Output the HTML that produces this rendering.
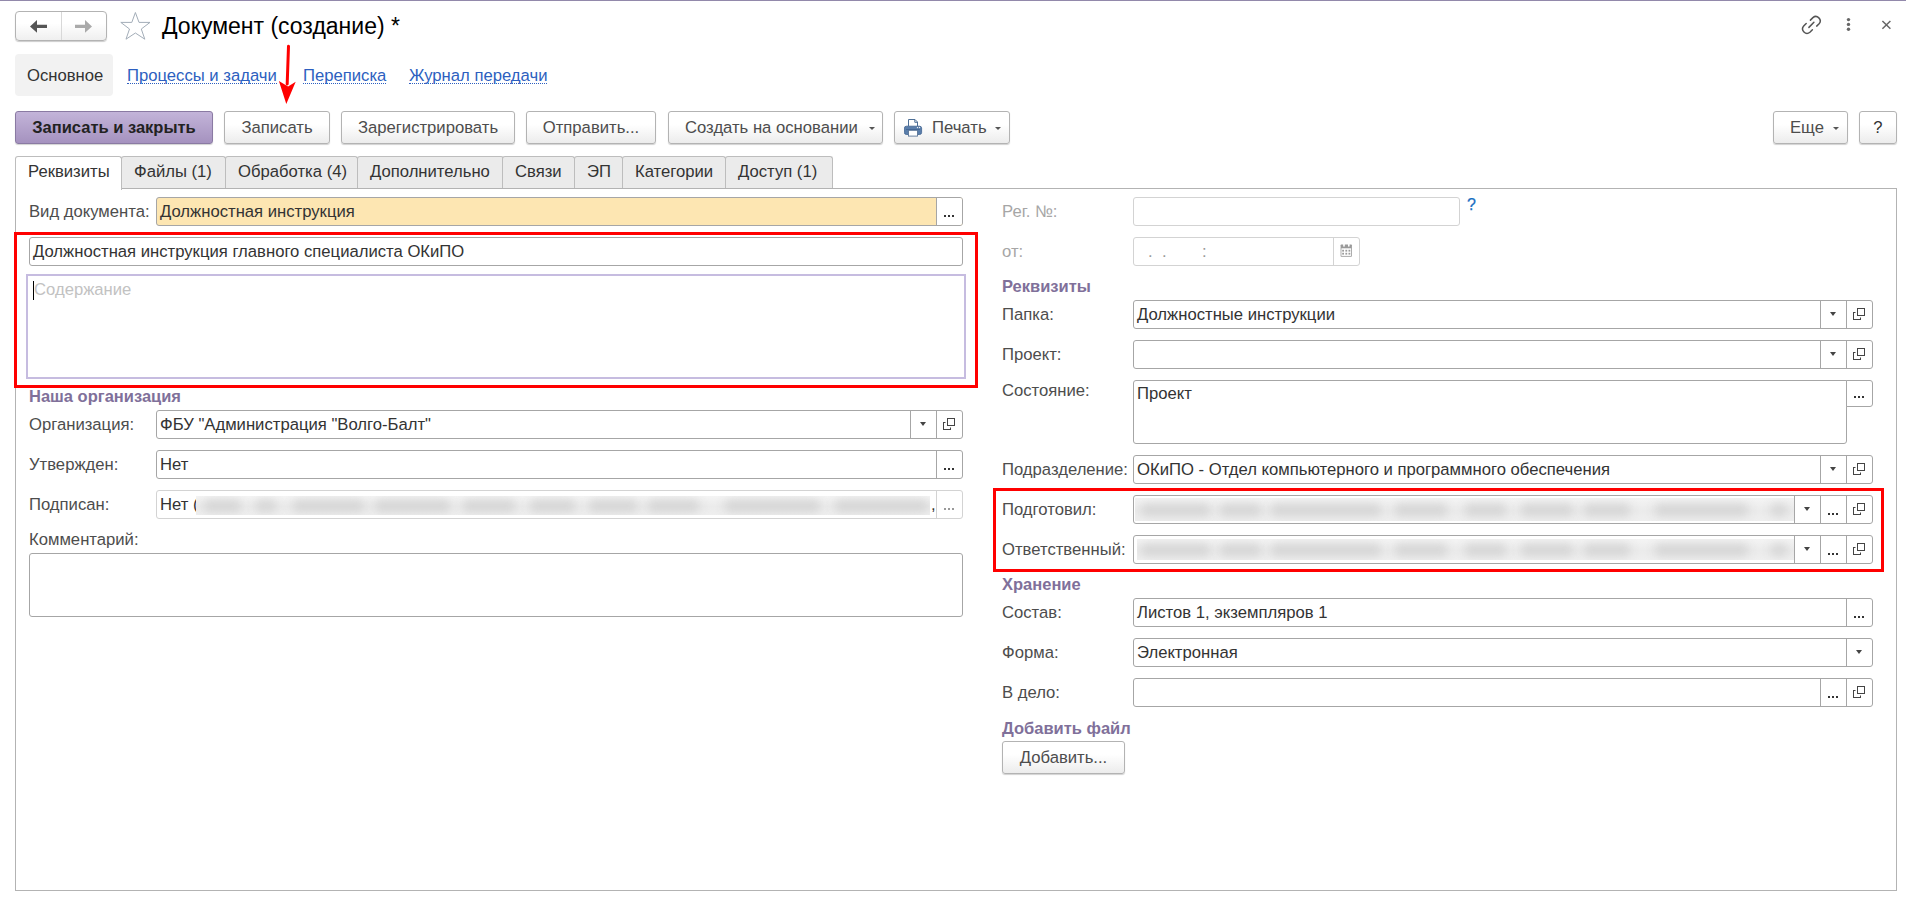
<!DOCTYPE html>
<html><head><meta charset="utf-8">
<style>
*{box-sizing:border-box;margin:0;padding:0}
html,body{width:1906px;height:904px;overflow:hidden;background:#fff}
body{position:relative;font-family:"Liberation Sans",sans-serif;font-size:16.67px;color:#333}
.a{position:absolute}
.t{position:absolute;line-height:20px;white-space:nowrap;margin-top:1px}
.lbl{color:#4d4d4d}
.grp{color:#80709a;font-weight:bold;font-size:16.5px;margin-top:0}
.btn{position:absolute;height:33px;top:111px;border:1px solid #b3b3b3;border-radius:3px;background:linear-gradient(#fff 0%,#fff 40%,#ececec 100%);box-shadow:0 1px 1px rgba(0,0,0,.18);color:#4d4d4d;line-height:31px;text-align:center;white-space:nowrap}
.tab{position:absolute;top:156px;height:32px;border:1px solid #bdbdbd;border-bottom:none;border-radius:3px 3px 0 0;background:#ebebeb;color:#333;line-height:29px;white-space:nowrap;padding-left:12px}
.fld{position:absolute;height:28px;border:1px solid #a6a6a6;border-radius:3px;background:#fff;overflow:hidden}
.fld.lt,.fb.lt{border-color:#d3d3d3}
.val{position:absolute;left:3px;top:0;margin-top:1px;line-height:26px;white-space:nowrap;color:#333}
.fb{position:absolute;top:0;bottom:0;width:26px;border-left:1px solid #a6a6a6}
.dd:after{content:"";position:absolute;left:9px;top:11px;border-left:3px solid transparent;border-right:3px solid transparent;border-top:4px solid #444}
.link{color:#2d5fc0}
.link span{display:inline-block;line-height:15px;border-bottom:1px dotted #2d5fc0}
.dots{position:absolute;left:0;right:0;top:0;bottom:0}
.dots i{position:absolute;top:17px;width:2px;height:2px;background:#333}
.blur{position:absolute;background:linear-gradient(#f4f4f4,#ebebeb 55%,#efefef);overflow:hidden}
.blur b{position:absolute;top:50%;height:12px;margin-top:-6px;background:#d5d5d5;filter:blur(5px);border-radius:6px}
.op:after{content:"";position:absolute;box-sizing:border-box;left:10px;top:7px;width:8px;height:8px;border:1.3px solid #444;background:#fff;box-shadow:0 0 0 1.5px #fff}
.op:before{content:"";position:absolute;box-sizing:border-box;left:6px;top:11px;width:8px;height:8px;border:1.3px solid #444}
.tri{position:absolute;top:15px;width:0;height:0;border-left:3px solid transparent;border-right:3px solid transparent;border-top:3px solid #555}
.red{position:absolute;border:3px solid #f00}
</style></head><body>
<!-- top line -->
<div class="a" style="left:0;top:0;width:1906px;height:1px;background:#9289ab"></div>

<!-- nav buttons -->
<div class="a" style="left:15px;top:11px;width:92px;height:30px;border:1px solid #b3b3b3;border-radius:4px;background:linear-gradient(#fff 40%,#efefef);box-shadow:0 1px 1px rgba(0,0,0,.2)"></div>
<div class="a" style="left:61px;top:12px;width:1px;height:28px;background:#d8d8d8"></div>
<svg class="a" style="left:0;top:0" width="160" height="50">
 <path d="M30 26.4 L37 20 L37 24.7 L47 24.7 L47 28 L37 28 L37 32.8 Z" fill="#555"/>
 <path d="M92 26.4 L85 20 L85 24.7 L75 24.7 L75 28 L85 28 L85 32.8 Z" fill="#aaa"/>
 <path d="M135.4 12.5 L139 22.4 L150 22.4 L141.3 29 L144.8 39.2 L135.4 33 L126 39.2 L129.5 29 L120.8 22.4 L131.8 22.4 Z" fill="none" stroke="#a3adb8" stroke-width="1"/>
</svg>
<div class="t" style="left:162px;top:11px;font-size:23px;line-height:28px;color:#000">Документ (создание) *</div>

<!-- right icons -->
<svg class="a" style="left:0;top:0" width="1906" height="50">
 <g fill="none" stroke="#555" stroke-width="1.5" stroke-linecap="round">
  <path d="M1810.4 20.1 L1812.9 17.6 A4.4 4.4 0 0 1 1819.1 23.8 L1816.7 26.1"/>
  <path d="M1806.2 23.5 L1803.7 26 A4.4 4.4 0 0 0 1809.9 32.2 L1812.4 29.7"/>
  <path d="M1808.9 27.4 L1813.9 22.3"/>
 </g>
 <g fill="#666"><circle cx="1848.5" cy="19.6" r="1.7"/><circle cx="1848.5" cy="24.4" r="1.7"/><circle cx="1848.5" cy="29.3" r="1.7"/></g>
 <g stroke="#666" stroke-width="1.5"><path d="M1882.4 21 L1890.4 28.8 M1890.4 21 L1882.4 28.8"/></g>
</svg>

<!-- nav row -->
<div class="a" style="left:15px;top:54px;width:98px;height:42px;background:#f2f2f2;border-radius:4px"></div>
<div class="t" style="left:27px;top:65px;color:#333">Основное</div>
<div class="t link" style="left:127px;top:65px"><span>Процессы и задачи</span></div>
<div class="t link" style="left:303px;top:65px"><span>Переписка</span></div>
<div class="t link" style="left:409px;top:65px"><span>Журнал передачи</span></div>

<!-- toolbar -->
<svg class="a" style="left:0;top:0;z-index:5" width="320" height="110">
 <path d="M288.5 46.2 L287.2 84" stroke="#f00" stroke-width="3" stroke-linecap="round"/>
 <path d="M278.9 81 L288.1 86.6 L295.7 81.8 L286.3 104.1 Z" fill="#f00"/>
</svg>
<div class="btn" style="left:15px;width:198px;background:linear-gradient(#c3b4d9,#a592bf);border-color:#8a7aa3;color:#222;font-weight:bold;font-size:16.5px">Записать и закрыть</div>
<div class="btn" style="left:224px;width:106px">Записать</div>
<div class="btn" style="left:341px;width:174px">Зарегистрировать</div>
<div class="btn" style="left:526px;width:130px">Отправить...</div>
<div class="btn" style="left:668px;width:215px;text-align:left;padding-left:16px">Создать на основании<i class="tri" style="left:200px"></i></div>
<div class="btn" style="left:894px;width:116px;text-align:left;padding-left:37px">Печать<i class="tri" style="left:100px"></i>
<svg class="a" style="left:9px;top:7px" width="20" height="20"><g transform="translate(-904,-119)">
 <path d="M908.5 126 V119.5 H915 L917.5 122 V126" fill="#fff" stroke="#4e6f96" stroke-width="1"/>
 <path d="M914.8 119.7 V122.3 H917.3" fill="none" stroke="#4e6f96" stroke-width="1"/>
 <rect x="904.4" y="126.2" width="17.2" height="8.3" rx="2" fill="#5a7eab" stroke="#3f6290" stroke-width="0.8"/>
 <rect x="908.5" y="130.3" width="9" height="5.8" fill="#fff" stroke="#5b7698" stroke-width="0.9"/>
 <path d="M906 129.5 H920" stroke="#3f6290" stroke-width="0.8"/>
 <circle cx="917.5" cy="127.6" r="0.7" fill="#fff"/><circle cx="919.6" cy="127.6" r="0.7" fill="#fff"/>
</g></svg></div>
<div class="btn" style="left:1773px;width:75px;text-align:left;padding-left:16px">Еще<i class="tri" style="left:59px"></i></div>
<div class="btn" style="left:1859px;width:38px;color:#333">?</div>

<!-- tabs -->
<div class="a" style="left:15px;top:188px;width:1882px;height:703px;border:1px solid #b3b3b3"></div>
<div class="tab" style="left:15px;width:107px;background:#fff;height:34px">Реквизиты</div>
<div class="tab" style="left:121px;width:105px">Файлы (1)</div>
<div class="tab" style="left:225px;width:133px">Обработка (4)</div>
<div class="tab" style="left:357px;width:147px">Дополнительно</div>
<div class="tab" style="left:502px;width:73px">Связи</div>
<div class="tab" style="left:574px;width:49px">ЭП</div>
<div class="tab" style="left:622px;width:104px">Категории</div>
<div class="tab" style="left:725px;width:108px">Доступ (1)</div>


<!-- LEFT COLUMN -->
<div class="t lbl" style="left:29px;top:201px">Вид документа:</div>
<div class="fld" style="left:156px;top:197px;width:807px;height:29px;background:#fde6b2">
 <div class="val" style="left:3px">Должностная инструкция</div>
 <div class="fb" style="right:0;background:#fff"><div class="dots"><i style="left:7px"></i><i style="left:11px"></i><i style="left:15px"></i></div></div>
</div>
<div class="fld" style="left:29px;top:237px;width:934px;height:29px">
 <div class="val" style="left:3px">Должностная инструкция главного специалиста ОКиПО</div>
</div>
<div class="a" style="left:26px;top:274px;width:940px;height:105px;border:2px solid #c6bce0"></div>
<div class="a" style="left:33px;top:281px;width:1px;height:19px;background:#000"></div>
<div class="t" style="left:34px;top:279px;color:#c2c2c2">Содержание</div>
<div class="red" style="left:14px;top:232px;width:964px;height:156px"></div>

<div class="t grp" style="left:29px;top:386px">Наша организация</div>
<div class="t lbl" style="left:29px;top:414px">Организация:</div>
<div class="fld" style="left:156px;top:410px;width:807px;height:29px">
 <div class="val">ФБУ "Администрация "Волго-Балт"</div>
 <div class="fb dd" style="right:26px"></div>
 <div class="fb op" style="right:0"></div>
</div>
<div class="t lbl" style="left:29px;top:454px">Утвержден:</div>
<div class="fld" style="left:156px;top:450px;width:807px;height:29px">
 <div class="val">Нет</div>
 <div class="fb" style="right:0"><div class="dots"><i style="left:7px"></i><i style="left:11px"></i><i style="left:15px"></i></div></div>
</div>
<div class="t lbl" style="left:29px;top:494px">Подписан:</div>
<div class="fld lt" style="left:156px;top:490px;width:807px;height:29px">
 <div class="val">Нет (</div>
 <div class="blur" style="left:39px;top:5px;width:734px;height:19px"><b style="left:7px;width:39px"></b><b style="left:59px;width:22px"></b><b style="left:96px;width:73px"></b><b style="left:178px;width:77px"></b><b style="left:266px;width:54px"></b><b style="left:333px;width:47px"></b><b style="left:392px;width:50px"></b><b style="left:451px;width:53px"></b><b style="left:528px;width:97px"></b><b style="left:638px;width:95px"></b></div>
 <div class="val" style="left:774px">,</div>
 <div class="fb lt" style="right:0"><div class="dots"><i style="left:7px;background:#999"></i><i style="left:11px;background:#999"></i><i style="left:15px;background:#999"></i></div></div>
</div>
<div class="t lbl" style="left:29px;top:529px">Комментарий:</div>
<div class="fld" style="left:29px;top:553px;width:934px;height:64px"></div>

<!-- RIGHT COLUMN -->
<div class="t" style="left:1002px;top:201px;color:#a6a6a6">Рег. №:</div>
<div class="fld lt" style="left:1133px;top:197px;width:327px;height:29px"></div>
<div class="t" style="left:1467px;top:194px;color:#176fc2;font-size:16px;-webkit-text-stroke:0.25px #176fc2">?</div>
<div class="t" style="left:1002px;top:241px;color:#a6a6a6">от:</div>
<div class="fld lt" style="left:1133px;top:237px;width:227px;height:29px">
 <div class="val" style="left:14px;color:#999;letter-spacing:0">.&nbsp;&nbsp;.<span style="position:absolute;left:54px">:</span></div>
 <div class="fb lt" style="right:0"><svg class="a" style="left:0;top:0" width="26" height="27"><g transform="translate(-1334,-238)">
 <path d="M1340.6 245.3 Q1340.6 244.6 1341.3 244.6 H1351.2 Q1351.9 244.6 1351.9 245.3 V255.9 Q1351.9 256.7 1351.2 256.7 H1341.3 Q1340.6 256.7 1340.6 255.9 Z" fill="#9a9a9a"/>
 <rect x="1341.4" y="248.3" width="9.7" height="7.6" fill="#fff"/>
 <rect x="1343.2" y="243.7" width="1.6" height="3" rx=".8" fill="#fff"/><rect x="1348" y="243.7" width="1.6" height="3" rx=".8" fill="#fff"/>
 <g fill="#9a9a9a"><rect x="1342.2" y="249.8" width="1.8" height="1.8"/><rect x="1345.4" y="249.8" width="1.8" height="1.8"/><rect x="1348.5" y="249.8" width="1.8" height="1.8"/>
 <rect x="1342.2" y="252.8" width="1.8" height="1.8"/><rect x="1345.4" y="252.8" width="1.8" height="1.8"/><rect x="1348.5" y="252.8" width="1.8" height="1.8"/></g>
</g></svg></div>
</div>
<div class="t grp" style="left:1002px;top:276px">Реквизиты</div>
<div class="t lbl" style="left:1002px;top:304px">Папка:</div>
<div class="fld" style="left:1133px;top:300px;width:740px;height:29px">
 <div class="val">Должностные инструкции</div>
 <div class="fb dd" style="right:26px"></div>
 <div class="fb op" style="right:0"></div>
</div>
<div class="t lbl" style="left:1002px;top:344px">Проект:</div>
<div class="fld" style="left:1133px;top:340px;width:740px;height:29px">
 <div class="fb dd" style="right:26px"></div>
 <div class="fb op" style="right:0"></div>
</div>
<div class="t lbl" style="left:1002px;top:380px">Состояние:</div>
<div class="fld" style="left:1133px;top:380px;width:714px;height:64px;border-radius:3px 0 3px 3px">
 <div class="val" style="top:-1px">Проект</div>
</div>
<div class="fld" style="left:1846px;top:380px;width:27px;height:27px;border-radius:0 3px 3px 0">
 <div class="dots"><i style="left:7px;top:15px"></i><i style="left:11px;top:15px"></i><i style="left:15px;top:15px"></i></div>
</div>
<div class="t lbl" style="left:1002px;top:459px">Подразделение:</div>
<div class="fld" style="left:1133px;top:455px;width:740px;height:29px">
 <div class="val">ОКиПО - Отдел компьютерного и программного обеспечения</div>
 <div class="fb dd" style="right:26px"></div>
 <div class="fb op" style="right:0"></div>
</div>
<div class="t lbl" style="left:1002px;top:499px">Подготовил:</div>
<div class="fld" style="left:1133px;top:495px;width:740px;height:29px">
 <div class="blur" style="left:1px;top:2px;width:660px;height:23px"><b style="left:5px;width:71px"></b><b style="left:84px;width:43px"></b><b style="left:135px;width:112px"></b><b style="left:259px;width:54px"></b><b style="left:329px;width:43px"></b><b style="left:385px;width:54px"></b><b style="left:448px;width:48px"></b><b style="left:519px;width:95px"></b><b style="left:635px;width:18px"></b></div>
 <div class="fb dd" style="right:52px"></div>
 <div class="fb" style="right:26px"><div class="dots"><i style="left:7px"></i><i style="left:11px"></i><i style="left:15px"></i></div></div>
 <div class="fb op" style="right:0"></div>
</div>
<div class="t lbl" style="left:1002px;top:539px">Ответственный:</div>
<div class="fld" style="left:1133px;top:535px;width:740px;height:29px">
 <div class="blur" style="left:3px;top:3px;width:658px;height:21px"><b style="left:3px;width:71px"></b><b style="left:82px;width:43px"></b><b style="left:133px;width:112px"></b><b style="left:257px;width:54px"></b><b style="left:327px;width:43px"></b><b style="left:383px;width:54px"></b><b style="left:446px;width:48px"></b><b style="left:517px;width:95px"></b><b style="left:633px;width:18px"></b></div>
 <div class="fb dd" style="right:52px"></div>
 <div class="fb" style="right:26px"><div class="dots"><i style="left:7px"></i><i style="left:11px"></i><i style="left:15px"></i></div></div>
 <div class="fb op" style="right:0"></div>
</div>
<div class="red" style="left:993px;top:488px;width:891px;height:84px"></div>

<div class="t grp" style="left:1002px;top:574px">Хранение</div>
<div class="t lbl" style="left:1002px;top:602px">Состав:</div>
<div class="fld" style="left:1133px;top:598px;width:740px;height:29px">
 <div class="val">Листов 1, экземпляров 1</div>
 <div class="fb" style="right:0"><div class="dots"><i style="left:7px"></i><i style="left:11px"></i><i style="left:15px"></i></div></div>
</div>
<div class="t lbl" style="left:1002px;top:642px">Форма:</div>
<div class="fld" style="left:1133px;top:638px;width:740px;height:29px">
 <div class="val">Электронная</div>
 <div class="fb dd" style="right:0"></div>
</div>
<div class="t lbl" style="left:1002px;top:682px">В дело:</div>
<div class="fld" style="left:1133px;top:678px;width:740px;height:29px">
 <div class="fb" style="right:26px"><div class="dots"><i style="left:7px"></i><i style="left:11px"></i><i style="left:15px"></i></div></div>
 <div class="fb op" style="right:0"></div>
</div>
<div class="t grp" style="left:1002px;top:718px">Добавить файл</div>
<div class="btn" style="left:1002px;top:741px;width:123px;height:33px;line-height:32px">Добавить...</div>

</body></html>
